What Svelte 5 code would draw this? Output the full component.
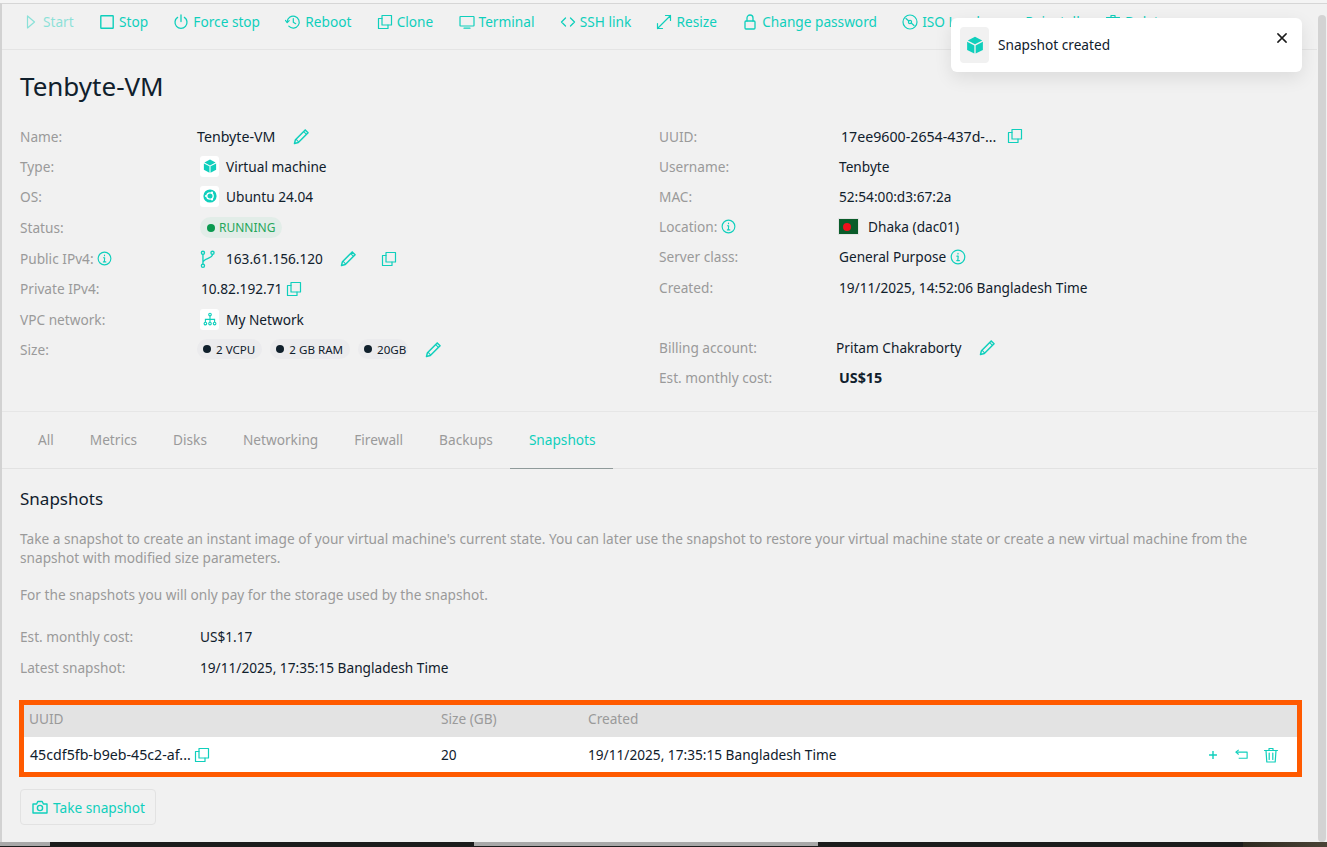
<script lang="ts">
  const actions = [
    { label: "Start", icon: "play", disabled: true },
    { label: "Stop", icon: "stop" },
    { label: "Force stop", icon: "power" },
    { label: "Reboot", icon: "reboot" },
    { label: "Clone", icon: "copy" },
    { label: "Terminal", icon: "monitor" },
    { label: "SSH link", icon: "code" },
    { label: "Resize", icon: "resize" },
    { label: "Change password", icon: "lock" },
    { label: "ISO Load", icon: "disc" },
    { label: "Reinstall", icon: "blank" },
    { label: "Delete", icon: "trash" },
  ];

  const tabs = ["All", "Metrics", "Disks", "Networking", "Firewall", "Backups", "Snapshots"];
</script>

{#snippet icon(name: string, size = 16)}
  <svg class="ico" width={size} height={size} viewBox="0 0 16 16" fill="none" stroke="currentColor" stroke-width="1.2" stroke-linecap="round" stroke-linejoin="round">
    {#if name === "play"}
      <path d="M4.5 2v12l7-6z" />
    {:else if name === "stop"}
      <rect x="1.8" y="1.8" width="12.4" height="12.4" rx="0.5" stroke-width="1.4" />
    {:else if name === "power"}
      <path d="M8 1v6.5M4.6 3.4a6 6 0 1 0 6.8 0" stroke-width="1.3" />
    {:else if name === "reboot"}
      <path d="M2.2 8a6 6 0 1 1 1.6 4.2M8.3 4.6v3.7l2.4 1.4" />
      <path d="M.4 6.4 2.2 8.6 4.2 6.6" />
    {:else if name === "copy"}
      <rect x="5" y="1.5" width="9.5" height="9.5" />
      <path d="M5 4.5H1.5v10H11V11" />
    {:else if name === "monitor"}
      <rect x="1" y="2.5" width="14" height="9.5" rx="0.5" />
      <path d="M5 14.2h6" />
    {:else if name === "code"}
      <path d="M5.5 4 1.5 8l4 4M10.5 4l4 4-4 4" stroke-width="1.3" />
    {:else if name === "resize"}
      <path d="M9.5 1.5h5v5M14.5 1.5l-13 13M1.5 9.5v5h5" />
    {:else if name === "lock"}
      <rect x="3" y="7" width="10" height="8" rx="1" stroke-width="1.3" />
      <path d="M5 7V4a3 3 0 0 1 6 0v3" stroke-width="1.3" />
    {:else if name === "disc"}
      <circle cx="8" cy="8" r="7" />
      <circle cx="8" cy="8" r="1.6" />
      <path d="M4 4.5 6.8 7M9.2 9l2.8 2.5" />
    {:else if name === "trash"}
      <path d="M1.5 3.5h13M3 3.5l.8 11.5h8.4L13 3.5M6 1.5h4v2H6zM6.2 6v6.5M9.8 6v6.5" />
    {:else if name === "pencil"}
      <path d="M11.5 1.8l2.7 2.7L5 13.7l-3.6.9.9-3.6z" stroke-width="1.4" />
      <path d="M3 10.8l2.2 2.2M10 3.3l2.7 2.7" stroke-width="1" />
    {:else if name === "info"}
      <circle cx="8" cy="8" r="6.8" />
      <path d="M8 4.4v.6M6.9 7.2H8.2L7.8 11.4M6.8 11.6h2.6" />
    {:else if name === "branch"}
      <circle cx="3.5" cy="2.5" r="1.4" />
      <circle cx="3.5" cy="14" r="1.4" />
      <circle cx="12" cy="2.5" r="1.4" />
      <path d="M3.5 4v8.6M12 4c0 3.6-8.5 3.6-8.5 7" />
    {:else if name === "camera"}
      <path d="M1 5h3.6l1.2-2.5h4.4L11.4 5H15v9H1z" stroke-width="1.4" />
      <circle cx="8" cy="9" r="2.6" stroke-width="1.4" />
    {:else if name === "plus"}
      <path d="M8 3.5v9M3.5 8h9" stroke-width="1.6" stroke-linecap="butt" />
    {:else if name === "undo"}
      <path d="M2 5.5h12v6.5H5" stroke-linecap="butt" />
      <path d="M5 3 2 5.5 5 8" stroke-linecap="butt" />
    {:else if name === "x"}
      <path d="M2.5 2.5l11 11M13.5 2.5l-11 11" stroke-width="2" />
    {/if}
  </svg>
{/snippet}

{#snippet cube(size = 16)}
  <svg width={size} height={size} viewBox="0 0 16 16">
    <path fill="currentColor" d="M8 .6 1.6 4 8 7.4 14.4 4zM1 5v7.4l6.4 3.2V8.4zM15 5v7.4l-6.4 3.2V8.4z" />
  </svg>
{/snippet}

<div class="page">
  <div class="window">
    <nav class="toolbar">
      {#each actions as action}
        <span class="action" class:disabled={action.disabled}>
          {@render icon(action.icon)}
          {action.label}
        </span>
      {/each}
    </nav>

    <header class="head">
      <h1>Tenbyte-VM</h1>
      <div class="details">
        <div class="col">
          <div class="row"><span class="key">Name:</span><span class="val wide">Tenbyte-VM <span class="gap18">{@render icon("pencil", 17)}</span></span></div>
          <div class="row"><span class="key">Type:</span><span class="val"><span class="tile">{@render cube(14)}</span>Virtual machine</span></div>
          <div class="row"><span class="key">OS:</span><span class="val"><span class="tile">
            <svg width="14" height="14" viewBox="0 0 14 14"><circle cx="7" cy="7" r="6.6" fill="currentColor" /><circle cx="7" cy="7" r="3.2" fill="none" stroke="#fff" stroke-width="1.3" /><circle cx="3" cy="7" r="1.1" fill="#fff" /><circle cx="9" cy="3.6" r="1.1" fill="#fff" /><circle cx="9" cy="10.4" r="1.1" fill="#fff" /></svg>
          </span>Ubuntu 24.04</span></div>
          <div class="row tall"><span class="key">Status:</span><span class="val"><span class="status"><i></i>RUNNING</span></span></div>
          <div class="row"><span class="key">Public IPv4: <span class="info">{@render icon("info", 15)}</span></span><span class="val"><span class="branch">{@render icon("branch", 18)}</span>163.61.156.120 <span class="gap18">{@render icon("pencil", 17)}</span><span class="gap24">{@render icon("copy", 16)}</span></span></div>
          <div class="row"><span class="key">Private IPv4:</span><span class="val plain">10.82.192.71 <span class="gap2">{@render icon("copy", 16)}</span></span></div>
          <div class="row"><span class="key">VPC network:</span><span class="val"><span class="tile">
            <svg width="14" height="14" viewBox="0 0 14 14" fill="none" stroke="currentColor" stroke-width="1.1"><circle cx="7" cy="2.6" r="1.3" /><circle cx="2.4" cy="11.6" r="1.3" /><circle cx="7" cy="11.6" r="1.3" /><circle cx="11.6" cy="11.6" r="1.3" /><path d="M7 4v6M2.4 10V7.4h9.2V10" /></svg>
          </span>My Network</span></div>
          <div class="row"><span class="key">Size:</span><span class="val chips">
            <span class="chip"><i></i>2 VCPU</span>
            <span class="chip"><i></i>2 GB RAM</span>
            <span class="chip last"><i></i>20GB</span>
            <span class="gap18">{@render icon("pencil", 17)}</span>
          </span></div>
        </div>

        <div class="col right">
          <div class="row"><span class="key">UUID:</span><span class="val uuid">17ee9600-2654-437d-... <span class="gap8">{@render icon("copy", 16)}</span></span></div>
          <div class="row"><span class="key">Username:</span><span class="val">Tenbyte</span></div>
          <div class="row"><span class="key">MAC:</span><span class="val">52:54:00:d3:67:2a</span></div>
          <div class="row"><span class="key">Location: <span class="info">{@render icon("info", 15)}</span></span><span class="val"><span class="flag"><i></i></span>Dhaka (dac01)</span></div>
          <div class="row"><span class="key">Server class:</span><span class="val">General Purpose <span class="info">{@render icon("info", 16)}</span></span></div>
          <div class="row"><span class="key">Created:</span><span class="val">19/11/2025, 14:52:06 Bangladesh Time</span></div>
          <div class="row spacer"></div>
          <div class="row"><span class="key">Billing account:</span><span class="val shift-r">Pritam Chakraborty <span class="gap18">{@render icon("pencil", 17)}</span></span></div>
          <div class="row"><span class="key">Est. monthly cost:</span><span class="val"><b>US$15</b></span></div>
        </div>
      </div>
    </header>

    <div class="tabs">
      {#each tabs as tab}
        <span class="tab" class:active={tab === "Snapshots"}>{tab}</span>
      {/each}
    </div>

    <section class="content">
      <h2>Snapshots</h2>
      <p>Take a snapshot to create an instant image of your virtual machine's current state. You can later use the snapshot to restore your virtual machine state or create a new virtual machine from the snapshot with modified size parameters.</p>
      <p>For the snapshots you will only pay for the storage used by the snapshot.</p>

      <div class="summary">
        <div><span class="key">Est. monthly cost:</span><span>US$1.17</span></div>
        <div><span class="key">Latest snapshot:</span><span>19/11/2025, 17:35:15 Bangladesh Time</span></div>
      </div>

      <div class="table">
        <div class="t-row t-head"><span>UUID</span><span>Size (GB)</span><span>Created</span><span></span></div>
        <div class="t-row t-body">
          <span class="t-uuid">45cdf5fb-b9eb-45c2-af... <span class="gap2">{@render icon("copy", 16)}</span></span>
          <span>20</span>
          <span>19/11/2025, 17:35:15 Bangladesh Time</span>
          <span class="t-actions">{@render icon("plus", 14)}{@render icon("undo", 15)}{@render icon("trash", 16)}</span>
        </div>
      </div>

      <button class="snap">{@render icon("camera", 16)} Take snapshot</button>
    </section>
  </div>

  <div class="scrollbar"></div>

  <div class="toast">
    <span class="toast-icon">{@render cube(18)}</span>
    <span class="toast-text">Snapshot created</span>
    <span class="toast-x">{@render icon("x", 12)}</span>
  </div>

  <div class="taskbar">
    <span class="strip left"></span>
    <span class="strip mid"></span>
    <span class="wallpaper"></span>
  </div>
</div>

<style>
  :global(body) {
    margin: 0;
    background: #f1f1f1;
  }

  .page {
    position: relative;
    width: 1327px;
    height: 847px;
    overflow: hidden;
    box-sizing: border-box;
    padding-top: 3px;
    font-family: "Noto Sans", "Open Sans", sans-serif;
    font-size: 13.67px;
    color: #10202c;
    background: #f4f4f4;
  }

  .window {
    height: 839px;
    border-top: 1px solid #d6d6d6;
    border-left: 2px solid #d2d2d2;
    box-sizing: border-box;
    padding-right: 10px;
    background: #f1f1f1;
  }

  .ico {
    flex: none;
    color: #0fcfbc;
    vertical-align: -3px;
  }

  .toolbar {
    display: flex;
    align-items: flex-start;
    gap: 25.3px;
    height: 46px;
    box-sizing: border-box;
    padding: 8px 0 0 21px;
    border-bottom: 1px solid #e4e4e4;
    color: #0fcfbc;
    white-space: nowrap;
    overflow: hidden;
  }

  .action {
    display: inline-flex;
    align-items: center;
    gap: 4px;
  }

  .action.disabled {
    opacity: 0.45;
  }

  .head {
    padding: 19px 18px 0;
    height: 361px;
    box-sizing: border-box;
  }

  h1 {
    margin: 0;
    font-size: 26px;
    font-weight: 400;
    line-height: 34px;
    color: #10202c;
  }

  .details {
    display: grid;
    grid-template-columns: 639px 1fr;
    margin-top: 18px;
  }

  .row {
    display: grid;
    grid-template-columns: 177px 1fr;
    align-items: center;
    height: 30.2px;
  }

  .right .row {
    grid-template-columns: 180px 1fr;
  }

  .col:first-child .row.tall {
    height: 32px;
  }

  .row.spacer {
    height: 30px;
  }

  .key {
    color: #9a9a9a;
  }

  .val {
    display: flex;
    align-items: center;
    white-space: pre;
  }

  .wide {
    font-size: 14.2px;
  }

  .uuid {
    padding-left: 2px;
    font-size: 14.2px;
  }

  .tile {
    display: inline-flex;
    align-items: center;
    justify-content: center;
    width: 19px;
    height: 21px;
    margin: 0 7px 0 3px;
    background: #fff;
    border-radius: 3px;
    color: #0fcfbc;
  }

  .plain {
    padding-left: 4px;
  }

  .branch {
    display: inline-flex;
    margin: 0 9px 0 2px;
  }

  .status {
    display: inline-flex;
    align-items: center;
    gap: 4px;
    height: 21px;
    margin-left: 3px;
    padding: 0 7px;
    border-radius: 11px;
    background: #e2ede8;
    color: #26a65b;
    font-size: 12px;
  }

  .status i {
    width: 8px;
    height: 8px;
    border-radius: 50%;
    background: #0a9a50;
  }

  .chips {
    gap: 8px;
  }

  .chip {
    display: inline-flex;
    align-items: center;
    gap: 5px;
    height: 20px;
    padding: 0 7px 0 6px;
    border-radius: 10px;
    background: #ebebed;
    font-size: 11.6px;
  }

  .chip i {
    width: 8px;
    height: 8px;
    border-radius: 50%;
    background: #10202c;
  }

  .chip.last {
    padding-right: 2px;
  }

  .gap18 {
    margin-left: 14px;
    display: inline-flex;
  }

  .chips .gap18 {
    margin-left: 9px;
  }

  .gap24 {
    margin-left: 24px;
    display: inline-flex;
  }

  .gap8 {
    margin-left: 7px;
    display: inline-flex;
  }

  .gap2 {
    margin-left: 0;
    display: inline-flex;
  }

  .info {
    display: inline-flex;
    vertical-align: -2px;
  }

  .shift-r {
    margin-left: -3px;
  }

  .flag {
    display: inline-flex;
    align-items: center;
    justify-content: center;
    width: 19px;
    height: 15px;
    margin-right: 10px;
    background: #0a5c2a;
    outline: 1px solid #e4e4e4;
  }

  .flag i {
    width: 8px;
    height: 8px;
    margin-left: -3px;
    border-radius: 50%;
    background: #f0101c;
  }

  b {
    font-weight: 700;
    font-size: 14.3px;
  }

  .tabs {
    display: flex;
    height: 58px;
    box-sizing: border-box;
    padding-left: 18px;
    border-top: 1px solid #e6e6e6;
    border-bottom: 1px solid #e2e2e2;
  }

  .tab {
    display: flex;
    align-items: center;
    padding: 0 18px 2px;
    color: #9a9a9a;
  }

  .tab.active {
    color: #0fcfbc;
    border-bottom: 1px solid #8f9a9a;
    margin-bottom: -1px;
    margin-left: -1px;
    padding: 0 17px 2px 19px;
  }

  .content {
    padding: 18px 18px 0;
  }

  h2 {
    margin: 0;
    font-size: 17px;
    font-weight: 400;
    line-height: 24px;
  }

  p {
    margin: 18px 0 0;
    line-height: 19px;
    color: #9a9a9a;
  }

  .summary {
    margin-top: 23px;
    display: grid;
    row-gap: 11px;
  }

  .summary div {
    display: grid;
    grid-template-columns: 180px 1fr;
    line-height: 20px;
  }

  .table {
    margin-top: 22px;
    margin-left: -1px;
    border: 5px solid #ff5a00;
    width: 1283px;
    box-sizing: border-box;
  }

  .t-row {
    display: grid;
    grid-template-columns: 412px 147px 1fr auto;
    align-items: center;
    padding: 0 18px 0 5px;
  }

  .t-head {
    height: 32px;
    box-sizing: border-box;
    padding-bottom: 5px;
    background: #e3e3e3;
    color: #9a9a9a;
  }

  .t-body {
    height: 35px;
    background: #fff;
  }

  .t-uuid {
    display: flex;
    align-items: center;
    padding-left: 1px;
    font-size: 14.2px;
    white-space: pre;
  }

  .t-actions {
    display: flex;
    align-items: center;
    gap: 14px;
  }

  .snap {
    display: inline-flex;
    align-items: center;
    gap: 5px;
    height: 36px;
    width: 136px;
    margin-top: 12px;
    padding: 0 11px;
    box-sizing: border-box;
    border: 1px solid #e2e2e2;
    border-radius: 4px;
    background: #f1f1f1;
    color: #0fcfbc;
    font: inherit;
    white-space: nowrap;
  }

  .scrollbar {
    position: absolute;
    top: 15px;
    right: 1px;
    width: 8px;
    height: 827px;
    border-radius: 4px;
    background: #d3d3d3;
  }

  .toast {
    position: absolute;
    top: 18px;
    left: 951px;
    width: 351px;
    height: 54px;
    display: flex;
    align-items: center;
    gap: 9px;
    padding-left: 9px;
    box-sizing: border-box;
    border-radius: 6px;
    background: #fff;
    box-shadow: 0 6px 18px rgb(0 0 0 / 0.09);
  }

  .toast-icon {
    display: flex;
    align-items: center;
    justify-content: center;
    width: 29px;
    height: 36px;
    border-radius: 4px;
    background: #f1f1f1;
    color: #0fcfbc;
  }

  .toast-text {
    padding-bottom: 2px;
  }

  .toast-x {
    position: absolute;
    top: 14px;
    right: 14px;
    display: flex;
  }

  .toast-x :global(.ico) {
    color: #1a1a1a;
  }

  .taskbar {
    position: absolute;
    left: 0;
    right: 0;
    bottom: 0;
    height: 5px;
    background: #1c1c1c;
  }

  .strip {
    position: absolute;
    top: 0;
    height: 4px;
    background: #a8a8a8;
  }

  .strip.left {
    left: 0;
    width: 50px;
  }

  .strip.mid {
    left: 474px;
    width: 344px;
  }

  .wallpaper {
    position: absolute;
    left: 1243px;
    right: 0;
    top: 0;
    height: 5px;
    background: linear-gradient(90deg, #2e2a20, #4a4336);
  }
</style>
